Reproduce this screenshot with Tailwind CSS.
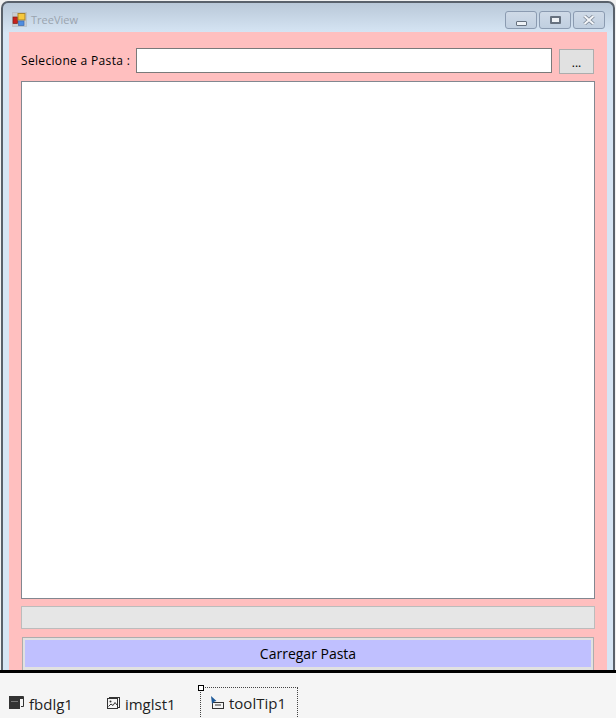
<!DOCTYPE html>
<html lang="pt">
<head>
<meta charset="utf-8">
<title>TreeView</title>
<script src="https://cdn.jsdelivr.net/npm/@tailwindcss/browser@4"></script>
</head>
<body class="w-[616px] h-[718px] overflow-hidden bg-[#f5f5f5] font-['Open_Sans','Noto_Sans',sans-serif]">
<div class="flex flex-col h-[718px]">
  <!-- designer surface -->
  <div class="h-[670px] shrink-0 overflow-hidden bg-[#f0f0f0] px-px pt-px">
    <div class="flex flex-col h-[700px] rounded-t-[7px] border-2 border-[#59616b] border-b-0 bg-[linear-gradient(to_bottom,#b9c8d8_0px,#d6e5f4_30px)]">
      <!-- title bar -->
      <div class="h-[29px] shrink-0 flex items-start pl-[9px] pr-[8px]">
        <svg width="15" height="15" viewBox="0 0 15 15" class="mt-[9px]">
          <rect x="0.5" y="0.5" width="14" height="14" fill="#c9ccd0" stroke="#aab0b6" stroke-dasharray="1 1"/>
          <rect x="1" y="5" width="4.5" height="6.5" fill="#c8201c" stroke="#7a2018" stroke-width="0.7"/>
          <rect x="6" y="1.5" width="7" height="6.5" fill="#f6c83c" stroke="#a9852a"/>
          <rect x="6.5" y="9" width="5.5" height="4.5" fill="#4f8de0" stroke="#3c6ab0" stroke-width="0.7"/>
        </svg>
        <span class="ml-[4px] mt-[11px] text-[11px] leading-[12px] text-[#9aa4af]">TreeView</span>
        <div class="ml-auto flex gap-[2px] mt-[8px]">
          <div class="w-[32px] h-[18px] rounded-[3px] border border-[#8b9bb1] bg-[linear-gradient(to_bottom,#cfdae7,#c0cfe0)] flex items-center justify-center">
            <div class="w-[11px] h-[5px] mt-[6px] rounded-[1px] border border-[#66717f] bg-[#eef2f6]"></div>
          </div>
          <div class="w-[32px] h-[18px] rounded-[3px] border border-[#8b9bb1] bg-[linear-gradient(to_bottom,#cfdae7,#c0cfe0)] flex items-center justify-center">
            <div class="w-[11px] h-[8px] border-2 border-[#66717f] rounded-[1px] bg-[#eef2f6]"></div>
          </div>
          <div class="w-[32px] h-[18px] rounded-[3px] border border-[#8b9bb1] bg-[linear-gradient(to_bottom,#cfdae7,#c0cfe0)] flex items-center justify-center">
            <svg width="12" height="10" viewBox="0 0 12 10"><path d="M1.5 1 L10.5 9 M10.5 1 L1.5 9" stroke="#7b8694" stroke-width="3.6"/><path d="M1.5 1 L10.5 9 M10.5 1 L1.5 9" stroke="#f4f6f9" stroke-width="2"/></svg>
          </div>
        </div>
      </div>
      <!-- client area -->
      <div class="mx-[6px] flex-1 bg-[#ffbfbf] px-[12px] pt-[16px]">
        <div class="flex items-start h-[26px]">
          <span class="w-[115px] shrink-0 h-[25px] flex items-center text-[12px] tracking-[0.33px] leading-none text-black whitespace-nowrap">Selecione a Pasta :</span>
          <div class="w-[416px] h-[25px] shrink-0 bg-white border border-[#7a7a7a]"></div>
          <div class="ml-[7px] mt-[1px] w-[35px] h-[25px] shrink-0 flex items-center justify-center pt-[2px] bg-[#e1e1e1] border border-[#adadad] text-[12px] leading-none text-black">...</div>
        </div>
        <div class="mt-[7px] w-[574px] h-[518px] bg-white border border-[#828790]"></div>
        <div class="mt-[7px] w-[574px] h-[23px] bg-[#e6e6e6] border border-[#bcbcbc]"></div>
        <div class="mt-[8px] ml-px w-[572px] h-[36px] border border-[#adadad] bg-[#e1e1e1] p-[2px]">
          <div class="h-[27px] bg-[#c0c0ff] flex items-center justify-center text-[14px] leading-none text-black">Carregar Pasta</div>
        </div>
      </div>
    </div>
  </div>
  <div class="h-[3px] shrink-0 bg-black"></div>
  <!-- component tray -->
  <div class="relative flex-1 flex items-start pt-[23px] pl-[9px] text-[15px] leading-none text-[#1e1e1e]">
    <div class="flex items-center h-[16px]">
      <svg width="15" height="14" viewBox="0 0 15 14" class="mr-[5px] mb-[2px]">
        <path d="M12 .5H14.5V10.5H12" fill="none" stroke="#333"/>
        <path d="M0 0h14v3H0z" fill="#333"/>
        <path d="M0 3h11v10H0z" fill="#333"/>
        <path d="M2 5h7v1H2z" fill="#777"/>
      </svg>
      <span>fbdlg1</span>
    </div>
    <div class="flex items-center h-[16px] ml-[34px]">
      <svg width="13" height="13" viewBox="0 0 13 13" class="mr-[5px] mb-[1px]">
        <rect x="2.5" y="0.5" width="10" height="10" fill="#f5f5f5" stroke="#333"/>
        <rect x="0.5" y="1.5" width="10" height="10" fill="#f5f5f5" stroke="#333"/>
        <circle cx="3.5" cy="4.5" r="1" fill="#333"/>
        <path d="M1.5 9.5 L4 7 L6 8.5 L8 5.5 L10 8" fill="none" stroke="#333"/>
      </svg>
      <span>imglst1</span>
    </div>
    <!-- selected component -->
    <div class="absolute left-[200px] top-[14px] w-[98px] h-[40px] border border-dotted border-[#444] flex items-start pt-[7px] pl-[10px]">
      <div class="absolute left-[-3px] top-[-3px] w-[6px] h-[6px] bg-white border border-black"></div>
      <svg width="15" height="14" viewBox="0 0 15 14" class="mr-[3px] mt-px">
        <rect x="1.5" y="6.5" width="11" height="6" fill="#f5f5f5" stroke="#333"/>
        <path d="M4 8.5h6v1H4z" fill="#333"/>
        <path d="M0 0 L5.5 5 L3.5 5.5 L1 8 Z" fill="#1f5a99"/>
      </svg>
      <span class="leading-[16px]">toolTip1</span>
    </div>
  </div>
</div>
</body>
</html>
